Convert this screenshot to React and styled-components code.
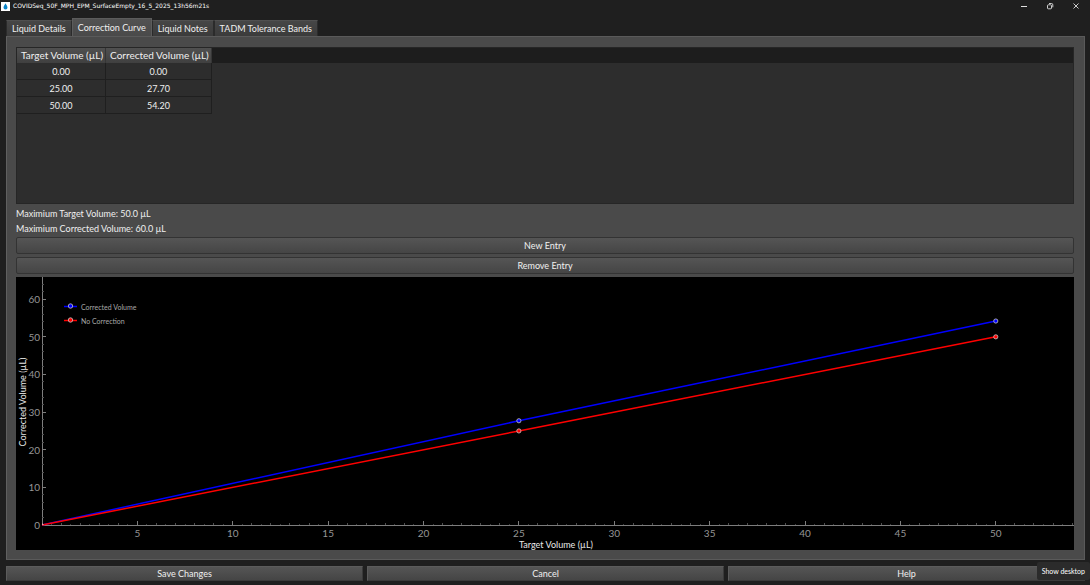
import React, { useLayoutEffect, useRef, useState } from "react";
import styled, { createGlobalStyle, css } from "styled-components";

const GlobalStyle = createGlobalStyle`
  * { box-sizing: border-box; }
  body {
    margin: 0;
    background: #1f1f1f;
    color: #f0f0f0;
    font-family: Lato, "Open Sans", sans-serif;
    font-size: 9px;
  }
  button { font: inherit; color: inherit; }
`;

const Window = styled.div`
  display: flex;
  flex-direction: column;
  height: 100vh;
  min-height: 480px;
`;

const TitleBar = styled.header`
  display: flex;
  align-items: center;
  height: 12px;
  flex: none;
  padding: 0 10px 0 1px;
  gap: 3px;
`;

const AppIcon = styled.svg`
  width: 9px;
  height: 9px;
  flex: none;
`;

const WindowTitle = styled.h1`
  margin: 0;
  flex: 1;
  font-family: "DejaVu Sans", sans-serif;
  font-size: 6px;
  line-height: 12px;
  font-weight: 400;
  color: #fff;
`;

const WindowControls = styled.div`
  display: flex;
  gap: 18px;
`;

const WindowButton = styled.button`
  display: flex;
  width: 8px;
  height: 8px;
  padding: 0;
  border: 0;
  background: none;
  color: #e0e0e0;
`;

const TabBar = styled.nav`
  display: flex;
  align-items: flex-end;
  flex: none;
  height: 24px;
  padding: 0 6px;
`;

const Tab = styled.button`
  height: 16px;
  padding: 0 5px;
  line-height: 15px;
  font-size: 9px;
  border: 1px solid #2b2b2b;
  border-top-color: #505050;
  border-bottom: 0;
  background: linear-gradient(#464646, #3b3b3b);
  ${(p) =>
    p.$active &&
    css`
      height: 18px;
      line-height: 17px;
      border-color: #5c5c5c;
      background: linear-gradient(#525252, #4a4a4a);
    `}
`;

const Panel = styled.main`
  display: flex;
  flex-direction: column;
  flex: 1;
  min-height: 0;
  margin: 0 5px 6px 6px;
  padding: 10px 10px 9px 9px;
  border: 1px solid #5a5a5a;
  border-left-color: #606060;
  background: #4a4a4a;
`;

const TableFrame = styled.section`
  flex: 156 1 0;
  min-height: 0;
  overflow: auto;
  border: 1px solid #262626;
  background: linear-gradient(#1d1d1d 15px, #2d2d2d 15px);
`;

const Table = styled.table`
  border-collapse: separate;
  border-spacing: 0;
  text-align: center;
`;

const HeadCell = styled.th`
  height: 15px;
  padding: 0 2px 0 4px;
  font-size: 10px;
  line-height: 15px;
  font-weight: 400;
  white-space: nowrap;
  background: linear-gradient(#505050, #404040);
  border-right: 1px solid #363636;
`;

const Cell = styled.td`
  height: 17px;
  padding: 1px 0 0;
  line-height: 15px;
  border: solid #1f1f1f;
  border-width: 0 1px 1px 0;
`;

const Summary = styled.div`
  flex: none;
  padding: 2px 0 1px;
`;

const SummaryLine = styled.p`
  margin: 0;
  line-height: 15px;
`;

const PushButton = styled.button`
  flex: none;
  height: 17px;
  padding: 0;
  line-height: 15px;
  border: 1px solid #333;
  border-radius: 2px;
  background: linear-gradient(#555, #454545);
`;

const EntryActions = styled.div`
  display: flex;
  flex-direction: column;
  flex: none;
  gap: 3px;
  padding: 0 0 3px;
`;

const ChartFrame = styled.figure`
  flex: 276 1 0;
  min-height: 0;
  margin: 0;
  overflow: hidden;
  background: #000;
`;

const Plot = styled.svg`
  display: block;
`;

const TickText = styled.text`
  font-size: 10px;
  fill: #969696;
`;

const AxisText = styled.text`
  font-size: 9px;
  fill: #e8e8e8;
  text-anchor: middle;
`;

const LegendText = styled.text`
  font-size: 7px;
  fill: #a8a8a8;
`;

const Footer = styled.footer`
  display: grid;
  grid-template-columns: repeat(3, 1fr);
  gap: 4px;
  flex: none;
  padding: 0 5px 4px 6px;
`;

const FooterButton = styled(PushButton)`
  height: 15px;
  line-height: 14px;
  border-color: #5c5c5c #3a3a3a #3a3a3a #5c5c5c;
  border-radius: 0;
`;

const Tooltip = styled.div`
  position: fixed;
  right: 0;
  bottom: 5px;
  padding: 0 5px;
  border-radius: 2px;
  background: #2b2b2b;
  color: #fff;
  font-size: 7px;
  line-height: 18px;
`;

const entries = [
  [0, 0],
  [25, 27.7],
  [50, 54.2],
];

const series = [
  { name: "Corrected Volume", color: "#0000ff", points: entries },
  { name: "No Correction", color: "#ff0000", points: entries.map(([x]) => [x, x]) },
];

const MARGIN = { left: 26, bottom: 25 };
const RANGE = { x: 54.1, y: 65.9 };

function steps(step, max) {
  const values = [];
  for (let v = 0; v <= max; v += step) values.push(v);
  return values;
}

function tickStyle(value, major, minor) {
  if (value % major === 0) return { length: 4, stroke: "#7d7d7d" };
  if (value % minor === 0) return { length: 2, stroke: "#505050" };
  return { length: 1, stroke: "#3c3c3c" };
}

function CorrectionChart() {
  const frame = useRef(null);
  const [size, setSize] = useState({ width: 1058, height: 273 });

  useLayoutEffect(() => {
    const measure = () =>
      setSize({ width: frame.current.clientWidth, height: frame.current.clientHeight });
    measure();
    const observer = new ResizeObserver(measure);
    observer.observe(frame.current);
    return () => observer.disconnect();
  }, []);

  const { width, height } = size;
  const baseline = height - MARGIN.bottom;
  const px = (x) => MARGIN.left + (x / RANGE.x) * (width - MARGIN.left);
  const py = (y) => baseline - (y / RANGE.y) * baseline;

  return (
    <ChartFrame ref={frame}>
      <Plot width={width} height={height} role="img" aria-label="Correction curve">
        <g shapeRendering="crispEdges">
          <line x1={MARGIN.left} x2={MARGIN.left} y1={0} y2={baseline} stroke="#7d7d7d" />
          <line x1={MARGIN.left} x2={width} y1={baseline} y2={baseline} stroke="#7d7d7d" />
          {steps(0.5, RANGE.x).map((v) => {
            const t = tickStyle(v, 5, 1);
            return <line key={v} x1={px(v)} x2={px(v)} y1={baseline - t.length} y2={baseline} stroke={t.stroke} />;
          })}
          {steps(2, RANGE.y).map((v) => {
            const t = tickStyle(v, 10, 2);
            return <line key={v} x1={MARGIN.left} x2={MARGIN.left + t.length} y1={py(v)} y2={py(v)} stroke={t.stroke} />;
          })}
        </g>
        {steps(5, 50).slice(1).map((v) => (
          <TickText key={v} x={px(v)} y={baseline + 12} textAnchor="middle">{v}</TickText>
        ))}
        {steps(10, 60).map((v) => (
          <TickText key={v} x={MARGIN.left - 2} y={py(v) + 4} textAnchor="end">{v}</TickText>
        ))}
        <AxisText x={MARGIN.left + (width - MARGIN.left) / 2 - 2} y={height - 2}>Target Volume (µL)</AxisText>
        <AxisText transform={`translate(10 ${baseline / 2 + 1}) rotate(-90)`}>Corrected Volume (µL)</AxisText>
        {series.map((s) => (
          <g key={s.name}>
            <polyline
              points={s.points.map(([x, y]) => `${px(x)},${py(y)}`).join(" ")}
              fill="none"
              stroke={s.color}
              strokeWidth="1.5"
            />
            {s.points.slice(1).map(([x, y]) => (
              <circle key={x} cx={px(x)} cy={py(y)} r="2.1" fill={s.color} stroke="#c8c8c8" strokeWidth="0.8" />
            ))}
          </g>
        ))}
        <path d={`M${MARGIN.left} ${baseline - 2}l2 2h-2z`} fill="#e8b0b0" />
        {series.map((s, i) => (
          <g key={s.name} transform={`translate(48 ${29 + i * 14})`}>
            <line x1="0" x2="13" y1="0.5" y2="0.5" stroke={s.color} strokeWidth="1.5" />
            <circle cx="6.5" cy="0" r="2.2" fill={s.color} stroke="#c8c8c8" strokeWidth="0.8" />
            <LegendText x="17" y="4">{s.name}</LegendText>
          </g>
        ))}
      </Plot>
    </ChartFrame>
  );
}

const tabs = ["Liquid Details", "Correction Curve", "Liquid Notes", "TADM Tolerance Bands"];

export default function App() {
  return (
    <Window>
      <GlobalStyle />
      <TitleBar>
        <AppIcon viewBox="0 0 9 9" aria-hidden="true">
          <rect width="9" height="9" fill="#fff" />
          <path d="M4.500 1.200C5 2.800 6.500 3.800 6.500 5.500a2 2 0 0 1-4 0C2.500 3.800 4 2.800 4.500 1.200z" fill="#0a84c8" />
        </AppIcon>
        <WindowTitle>COVIDSeq_50F_MPH_EPM_SurfaceEmpty_16_5_2025_13h56m21s</WindowTitle>
        <WindowControls>
          <WindowButton aria-label="Minimize">
            <svg width="8" height="8"><path d="M1 4.500h6" stroke="currentColor" /></svg>
          </WindowButton>
          <WindowButton aria-label="Restore">
            <svg width="8" height="8" fill="none" stroke="currentColor" strokeWidth="0.9">
              <rect x="1.500" y="2.800" width="4" height="4" rx="0.8" />
              <path d="M3 1.500h2.500a1.300 1.300 0 0 1 1.300 1.300v2.500" />
            </svg>
          </WindowButton>
          <WindowButton aria-label="Close">
            <svg width="8" height="8"><path d="M1.500 1.500l5 5m0-5l-5 5" stroke="currentColor" strokeWidth="0.9" /></svg>
          </WindowButton>
        </WindowControls>
      </TitleBar>
      <TabBar>
        {tabs.map((t) => (
          <Tab key={t} $active={t === "Correction Curve"}>{t}</Tab>
        ))}
      </TabBar>
      <Panel>
        <TableFrame>
          <Table>
            <thead>
              <tr>
                <HeadCell>Target Volume (µL)</HeadCell>
                <HeadCell>Corrected Volume (µL)</HeadCell>
              </tr>
            </thead>
            <tbody>
              {entries.map(([target, corrected]) => (
                <tr key={target}>
                  <Cell>{target.toFixed(2)}</Cell>
                  <Cell>{corrected.toFixed(2)}</Cell>
                </tr>
              ))}
            </tbody>
          </Table>
        </TableFrame>
        <Summary>
          <SummaryLine>Maximium Target Volume: 50.0 µL</SummaryLine>
          <SummaryLine>Maximium Corrected Volume: 60.0 µL</SummaryLine>
        </Summary>
        <EntryActions>
          <PushButton>New Entry</PushButton>
          <PushButton>Remove Entry</PushButton>
        </EntryActions>
        <CorrectionChart />
      </Panel>
      <Footer>
        <FooterButton>Save Changes</FooterButton>
        <FooterButton>Cancel</FooterButton>
        <FooterButton>Help</FooterButton>
      </Footer>
      <Tooltip role="tooltip">Show desktop</Tooltip>
    </Window>
  );
}
